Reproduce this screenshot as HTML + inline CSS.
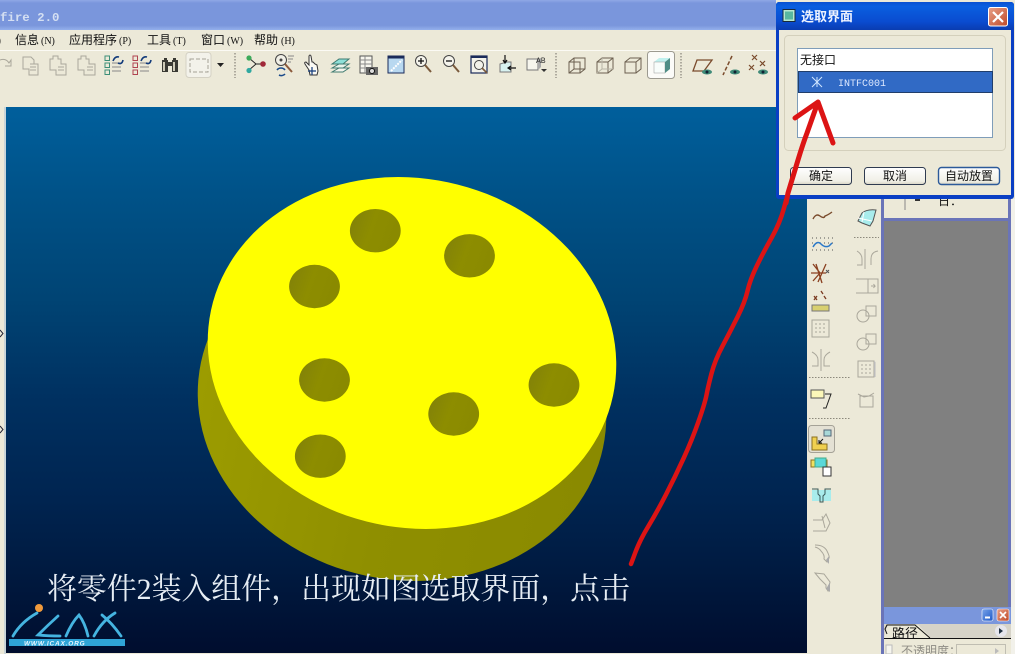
<!DOCTYPE html>
<html><head><meta charset="utf-8"><style>
html,body{margin:0;padding:0;background:#ece9d8;overflow:hidden}
svg{display:block}
text{font-family:"Liberation Sans","Noto Sans CJK SC",sans-serif}
.m{font-family:"Liberation Serif","Noto Serif CJK SC",serif;font-size:12px;fill:#111}
.k{font-family:"Liberation Sans","Noto Sans CJK SC",sans-serif;font-size:12px;fill:#111}
.g{fill:none;stroke:#aaa79b;stroke-width:1}
.d{fill:none;stroke:#6b5f4f;stroke-width:1}
.b{fill:none;stroke:#7a4b2c;stroke-width:1.4}
</style></head><body>
<svg xmlns="http://www.w3.org/2000/svg" width="1015" height="654" viewBox="0 0 1015 654">
<defs>
<linearGradient id="vp" x1="0" y1="0" x2="0" y2="1"><stop offset="0" stop-color="#005f9c"/><stop offset=".16" stop-color="#005288"/><stop offset=".35" stop-color="#004474"/><stop offset=".54" stop-color="#003060"/><stop offset=".72" stop-color="#002450"/><stop offset=".85" stop-color="#001a40"/><stop offset="1" stop-color="#000d2e"/></linearGradient>
<linearGradient id="tb" x1="0" y1="0" x2="0" y2="1"><stop offset="0" stop-color="#8fa8e6"/><stop offset=".1" stop-color="#7a96dc"/><stop offset=".85" stop-color="#7a96dc"/><stop offset="1" stop-color="#94b0ec"/></linearGradient>
<linearGradient id="dt" x1="0" y1="0" x2="0" y2="1"><stop offset="0" stop-color="#0a50d0"/><stop offset=".15" stop-color="#0a5fe0"/><stop offset=".7" stop-color="#0a4cd0"/><stop offset="1" stop-color="#0a3cb0"/></linearGradient>
<linearGradient id="hole" x1="0" y1="0" x2="1" y2=".3"><stop offset="0" stop-color="#80800a"/><stop offset=".5" stop-color="#8d8d00"/><stop offset="1" stop-color="#8a8a00"/></linearGradient>
<linearGradient id="side" x1="0" y1="0" x2="1" y2="0"><stop offset="0" stop-color="#9c9c00"/><stop offset=".5" stop-color="#8f8f00"/><stop offset="1" stop-color="#8a8a00"/></linearGradient>
<linearGradient id="btn" x1="0" y1="0" x2="0" y2="1"><stop offset="0" stop-color="#fff"/><stop offset=".8" stop-color="#f0efe6"/><stop offset="1" stop-color="#d8d4c4"/></linearGradient>
<linearGradient id="cls" x1="0" y1="0" x2="1" y2="1"><stop offset="0" stop-color="#e8a088"/><stop offset="1" stop-color="#c04a28"/></linearGradient>
<linearGradient id="mn" x1="0" y1="0" x2="1" y2="1"><stop offset="0" stop-color="#7aa4e8"/><stop offset="1" stop-color="#1c58c8"/></linearGradient>
</defs>

<rect width="1015" height="654" fill="#ece9d8"/>
<!-- title bar -->
<rect x="0" y="0" width="776" height="30" fill="url(#tb)"/>
<text x="0" y="21" style="font-family:'Liberation Mono',monospace;font-size:12.4px;font-weight:bold;fill:#d4dff2">fire 2.0</text>
<!-- menu -->
<rect x="0" y="30" width="776" height="20" fill="#ece9d8"/>
<rect x="0" y="50" width="776" height="1" fill="#fbfaf4"/>
<text class="m" x="-3" y="44">)</text>
<text class="k" x="15" y="44">信息</text><text class="m" x="41" y="44" style="font-size:10px">(N)</text>
<text class="k" x="69" y="44">应用程序</text><text class="m" x="119" y="44" style="font-size:10px">(P)</text>
<text class="k" x="147" y="44">工具</text><text class="m" x="173" y="44" style="font-size:10px">(T)</text>
<text class="k" x="201" y="44">窗口</text><text class="m" x="227" y="44" style="font-size:10px">(W)</text>
<text class="k" x="254" y="44">帮助</text><text class="m" x="281" y="44" style="font-size:10px">(H)</text>

<!-- toolbar icons -->
<path class="g" d="M0 60q6-2 9 3l2-3v6h-6" stroke-width="2"/>
<g class="g"><path d="M23 57h8l3 3v4h4v11h-9v-6h-6z"/><path d="M30 64h4M30 67h6M30 70h6"/></g>
<g class="g"><path d="M50 59h3v-3h5v3h3v5h5v11h-10v-5h-6z"/><path d="M58 67h6M58 70h6"/></g>
<g class="g"><path d="M78 59h3v-3h5v3h3v5h6v11h-11v-5h-6z"/><path d="M87 67h6M87 70h6"/></g>
<g fill="none" stroke="#3c8e78"><rect x="105" y="56" width="4.5" height="4.5"/><rect x="105" y="63" width="4.5" height="4.5"/><rect x="105" y="70" width="4.5" height="4.5"/></g>
<path d="M112 63h10M112 67h9M112 71h9" stroke="#888" fill="none"/>
<path d="M113 61q2-5 6-4M123 60q-1 5-5 3" stroke="#123a7a" stroke-width="1.6" fill="none"/>
<g fill="none" stroke="#b04450"><rect x="133" y="56" width="4.5" height="4.5"/><rect x="133" y="63" width="4.5" height="4.5"/><rect x="133" y="70" width="4.5" height="4.5"/></g>
<path d="M140 63h10M140 67h9M140 71h9" stroke="#888" fill="none"/>
<path d="M141 61q2-5 6-4M151 60q-1 5-5 3" stroke="#123a7a" stroke-width="1.6" fill="none"/>
<g fill="#3a3a34"><rect x="162" y="60" width="6" height="12"/><rect x="172" y="60" width="6" height="12"/><rect x="164" y="58" width="3" height="3"/><rect x="173" y="58" width="3" height="3"/><rect x="167" y="62" width="6" height="4"/></g><rect x="163" y="62" width="2" height="9" fill="#cfcbb8"/><rect x="173" y="62" width="2" height="9" fill="#cfcbb8"/>
<rect x="186" y="52.500" width="25" height="25" rx="3" fill="#f3f2ea" stroke="#d4d1c4"/>
<rect x="190" y="59" width="18" height="13" fill="none" stroke="#a5a297" stroke-dasharray="4 2"/>
<path d="M217 63h7l-3.500 4z" fill="#222"/>
<path d="M235 53v25M556 53v25M681 53v25" stroke="#99968a" stroke-width="1.500" stroke-dasharray="1.500 1.500"/>

<!-- datum etc -->
<path d="M256 64l-7-6M256 64h6M256 64l-7 6" stroke="#222" fill="none"/>
<circle cx="249" cy="58" r="2.600" fill="#3caa5a"/><circle cx="263" cy="64" r="2.800" fill="#a02838"/><circle cx="249" cy="70.500" r="2.600" fill="#30a8a0"/>
<circle cx="281" cy="60" r="5.500" fill="#f0efe6" stroke="#444"/><circle cx="281" cy="60" r="1.500" fill="#444"/>
<path d="M285 64l7 8" stroke="#8b5a3c" stroke-width="2"/><path d="M288 56h6M288 59h5M288 62h3" stroke="#888" stroke-width="1" fill="none"/>
<path d="M277 70a5 5 0 0 1 8 0M279 75a5 5 0 0 0 6-1" stroke="#1a4a8a" stroke-width="1.600" fill="none"/>
<path d="M309 70l-4-6q-1-2 1-2l3 3v-9q1-2 2 0l1 6h1l1 1 1 1 2 1 1 6-1 4h-7z" fill="#fbfaf4" stroke="#333"/>
<path d="M312 67v8M308 71h8" stroke="#123a7a" stroke-width="1.200"/>
<path d="M332 64l7-5h10l-6 5z" fill="#8ee0d8" stroke="#3f7a70"/><path d="M332 68l7-4h10l-6 4z" fill="#e8f3ea" stroke="#3f7a70"/><path d="M332 72l7-4h10l-6 4z" fill="#f5f4ec" stroke="#3f7a70"/>
<rect x="360" y="56" width="12" height="17" fill="#f7f6ee" stroke="#555"/><path d="M360 60h12M360 64h12M360 68h12M365 56v17" stroke="#888"/>
<rect x="366" y="67" width="12" height="8" fill="#666"/><circle cx="372" cy="71" r="2.500" fill="#ddd" stroke="#111"/>
<rect x="388" y="56" width="16" height="17" fill="#b8d8f0" stroke="#1a2a5a"/><rect x="388" y="56" width="16" height="2.500" fill="#1a2a5a"/><path d="M391 71l11-11" stroke="#fff" stroke-width="2" stroke-dasharray="2 1"/>
<!-- zoom -->
<circle cx="421" cy="61" r="5.500" fill="#f5f4ec" stroke="#444"/><path d="M418 61h6M421 58v6" stroke="#111" stroke-width="1.300"/><path d="M425 65l6 7" stroke="#7a5a3c" stroke-width="2"/>
<circle cx="449" cy="61" r="5.500" fill="#f5f4ec" stroke="#444"/><path d="M446 61h6" stroke="#111" stroke-width="1.300"/><path d="M453 65l6 7" stroke="#7a5a3c" stroke-width="2"/>
<rect x="471" y="56" width="16" height="17" fill="#f3f2ea" stroke="#1a2a5a" stroke-width="1.200"/><rect x="471" y="55.500" width="16" height="2.500" fill="#1a2a5a"/><circle cx="479" cy="65" r="4.500" fill="none" stroke="#444"/><path d="M482 68l5 5" stroke="#7a5a3c" stroke-width="1.600"/>
<path d="M500 64l7-2h4v10h-11z" fill="#d8f2f0" stroke="#777"/><path d="M505 55v7M503 60l2 3 2-3M516 68h-7M511 66l-3 2 3 2" fill="none" stroke="#111" stroke-width="1.200"/>
<rect x="527" y="59" width="11" height="11" fill="#f6f5ed" stroke="#777"/><path d="M538 59l3-1v9l-3 3z" fill="#aaa"/><text x="536" y="63" style="font-size:8px;font-family:'Liberation Mono',monospace;fill:#333">AB</text><path d="M541 69h6l-3 3z" fill="#333"/>
<!-- cubes -->
<g class="d"><path d="M569 62h11v11h-11zM569 62l5-4h11v11l-5 4M574 58v11h11M574 69l-5 4"/></g>
<g class="d"><path d="M597 62h11v11h-11zM597 62l5-4h11v11l-5 4M608 62l5-4" /><path d="M602 58v11h11M602 69l-5 4" stroke="#b8b5a6"/></g>
<g class="d"><path d="M625 62h11v11h-11zM625 62l5-4h11v11l-5 4M636 62l5-4"/></g>
<rect x="647.500" y="51.500" width="27" height="27" rx="3" fill="#fbfbf8" stroke="#9c9a90"/>
<path d="M654 62l5-4h11l-5 4z" fill="#bff0ee"/><rect x="654" y="62" width="11" height="11" fill="#f8fdfb" stroke="#999" stroke-width=".5"/><path d="M665 62l5-4v11l-5 4z" fill="#4f8d86"/>
<!-- datum display -->
<path d="M697 60h15l-8 11h-11z" fill="none" stroke="#7a4b2c" stroke-width="1.300"/><ellipse cx="707" cy="72" rx="5" ry="2.500" fill="#3f8a78"/><circle cx="707" cy="72" r="1.500" fill="#123"/>
<path d="M732 56l-9 19" stroke="#7a4b2c" stroke-width="1.500" stroke-dasharray="4 2"/><ellipse cx="735" cy="72" rx="5" ry="2.500" fill="#3f8a78"/><circle cx="735" cy="72" r="1.500" fill="#123"/>
<g stroke="#7a4b2c" stroke-width="1.200"><path d="M752 55l5 5M757 55l-5 5M760 61l5 5M765 61l-5 5M749 65l5 5M754 65l-5 5"/></g><ellipse cx="763" cy="72" rx="5" ry="2.500" fill="#3f8a78"/><circle cx="763" cy="72" r="1.500" fill="#123"/>

<!-- viewport -->
<rect x="0" y="107" width="6" height="547" fill="#ece9d8"/>
<rect x="4" y="107" width="2" height="547" fill="#c8d4d8"/>
<path d="M0 330l3 3.500-3 3.500M0 426l3 3.500-3 3.500" stroke="#223" fill="none"/>
<rect x="6" y="107" width="801" height="546" fill="url(#vp)"/>

<!-- part -->
<polygon points="208,345 198,397 606,421 616,369" fill="url(#side)"/>
<ellipse cx="402" cy="405" rx="205.500" ry="174.500" transform="rotate(12 402 405)" fill="url(#side)"/>
<ellipse cx="412" cy="353" rx="205.500" ry="174.500" transform="rotate(12 412 353)" fill="#ffff00"/>
<g fill="url(#hole)">
<ellipse cx="375.300" cy="230.700" rx="25.400" ry="21.700"/>
<ellipse cx="469.500" cy="255.800" rx="25.400" ry="21.700"/>
<ellipse cx="314.500" cy="286.500" rx="25.400" ry="21.700"/>
<ellipse cx="324.500" cy="380" rx="25.400" ry="21.700"/>
<ellipse cx="554" cy="385" rx="25.400" ry="21.700"/>
<ellipse cx="453.700" cy="414" rx="25.400" ry="21.700"/>
<ellipse cx="320.300" cy="456.200" rx="25.400" ry="21.700"/>
</g>

<!-- caption -->
<text x="47" y="599" style="font-family:'Liberation Serif','Noto Serif CJK SC',serif;font-size:29.900px;fill:#e6edf4">将零件2装入组件，出现如图选取界面，点击</text>

<!-- logo -->
<g fill="none" stroke="#45b4e0" stroke-width="3" stroke-linecap="round">
<path d="M13 636q8-14 24-23" stroke-width="2.800"/>
<path d="M58 616q-10 9-20 19 10 1 22 1" stroke-width="2.800"/>
<path d="M66 636q6-14 13-21 6 8 9 21" stroke-width="2.800"/>
<path d="M94 636q8-15 21-23M102 615q10 8 19 21" stroke-width="2.800"/>
</g>
<circle cx="39" cy="608" r="4" fill="#f09a3c"/>
<rect x="9" y="639" width="116" height="7" fill="#2fa4d6"/>
<text x="24" y="645.500" style="font-size:6.500px;font-weight:bold;font-style:italic;fill:#eaf6ff;letter-spacing:.8px">WWW.ICAX.ORG</text>

<!-- red arrow -->
<path d="M631 564L635.500 552Q640 540 648.500 526Q657 512 666 494.500Q675 477 683.500 458.500Q692 440 698.500 421.500Q705 403 706.500 395Q708 387 711.500 373.500Q715 360 722.500 346Q730 332 737.500 317Q745 302 747.500 291Q750 280 756.500 266.500Q763 253 771.500 238Q780 223 784 208L788 193" fill="none" stroke="#dc1414" stroke-width="4.500" stroke-linecap="round" stroke-linejoin="round"/>

<!-- right beige panel -->
<rect x="807" y="107" width="74" height="547" fill="#ece9d8"/>
<path d="M813 219q3-6 7-3t5 0q3-1 7-4" class="b"/>
<g fill="#555"><path d="M812 238h21M812 243h21M812 250h21" stroke="#555" stroke-width="1" stroke-dasharray="1 3"/></g>
<path d="M813 247q4-7 8-3t8 2l3-3" fill="none" stroke="#2a78c8" stroke-width="1.500"/>
<path d="M813 264l7 9-7 8M826 264l-8 18M811 273h15M816 264l6 19" stroke="#8a4020" stroke-width="1.300" fill="none"/><path d="M826 270l3 3m0-3l-3 3" stroke="#555"/>
<rect x="812" y="305" width="17" height="6" fill="#d8d070" stroke="#777"/><path d="M814 296l3 4m0-4l-3 4M821 291l2 3M824 296l2 3" stroke="#7a3a20" stroke-width="1.300"/>
<rect x="812" y="320" width="17" height="17" fill="#ece9d8" stroke="#a8a69a"/><path d="M815 324h11M815 328h11M815 332h11" stroke="#a8a69a" stroke-dasharray="2 2"/>
<path d="M821 349v22M812 352q6 3 6 8v6h-6M830 352q-6 3-6 8v6h6" class="g"/>
<path d="M809 377.500h41M809 418.500h41" stroke="#8c897c" stroke-dasharray="1.500 1.500"/>
<rect x="811" y="390" width="13" height="8" fill="#fbf7b8" stroke="#555"/><path d="M825 394h6l-5 14h-3" fill="none" stroke="#222"/>
<!-- column 2 -->
<path d="M858 221l4-8q5-4 14-3l-3 11-3 5-8-3z" fill="#a8ecec" stroke="#555"/><path d="M864 212l-2 10M858 218l14 3" stroke="#fff" fill="none"/>
<path d="M854 237.500h25" stroke="#8c897c" stroke-dasharray="1.500 1.500"/>
<path d="M865 249v20M857 251q5 3 5 8v6h-5M878 251q-7 1-7 8v6" class="g"/>
<path d="M856 279h22v14h-22M868 279v14M871 286h4l-1.500-2M875 286l-1.500 2" class="g"/>
<rect x="866" y="306" width="10" height="10" class="g"/><circle cx="863" cy="316" r="6" class="g"/>
<rect x="866" y="334" width="10" height="10" class="g"/><circle cx="863" cy="344" r="6" class="g"/>
<rect x="858" y="361" width="16" height="16" class="g"/><path d="M861 365h10M861 369h10M861 373h10" class="g" stroke-dasharray="2 2"/><path d="M874 361l1.500 1v15h-1.500z" fill="#bbb"/>
<path d="M860 396h13v11h-13zM858 394l6 3 5-1 5-3" class="g" stroke="#8c897c"/>
<!-- bottom icons col 1 -->
<rect x="808.500" y="425.500" width="26" height="27" rx="3" fill="#e4e1d4" stroke="#a5a297"/>
<path d="M812 437h5v7h10v6h-15z" fill="#f0d050" stroke="#8a7020"/><rect x="824" y="430" width="7" height="6" fill="#a8d8d8" stroke="#567"/><path d="M823 439l-4 4M819 440v3h3" stroke="#111" fill="none"/>
<path d="M811 460h16v7h-16z" fill="#f0e060" stroke="#8a7020"/><path d="M815 458h11v9h-11z" fill="#5ad8d8" stroke="#4a8"/><rect x="823" y="467" width="8" height="9" fill="#fff" stroke="#333"/>
<rect x="812" y="490" width="19" height="11" fill="#a8ecec"/><path d="M812 489h6v5l2 2v6h3v-6l2-2v-5h6" fill="none" stroke="#3a5a5a"/>
<path d="M813 520h9l4-6 4 9-4 8h-13M822 516l3 12" class="g"/>
<path d="M815 545q9 0 12 6t2 7l-2 4-3-3q1-4-3-8-2-3-6-4" class="g"/><path d="M829 556v8l-3-4z" fill="#aaa"/>
<path d="M815 573l9 1 6 8-2 9-2-3v-3l-6-6z" class="g"/><path d="M830 582v10l-4-3z" fill="#aaa"/>

<!-- left border right panel -->
<rect x="881" y="199" width="3" height="455" fill="#6a74b8"/>
<rect x="884" y="199" width="128" height="20" fill="#ece9d8"/>
<rect x="881" y="218" width="131" height="3" fill="#6a74b8"/>
<path d="M905 199v11" stroke="#888"/><path d="M915 200h5" stroke="#333" stroke-width="2"/><text class="k" x="938" y="205">日：</text>
<rect x="884" y="221" width="124" height="386" fill="#808080"/>
<rect x="1008" y="199" width="3" height="455" fill="#6a74b8"/>
<rect x="1011" y="199" width="4" height="455" fill="#f2f1ea"/>

<!-- bottom docked panel -->
<rect x="884" y="607" width="127" height="17" fill="#7a96dc"/>
<rect x="982" y="609" width="11" height="12" rx="2" fill="url(#mn)" stroke="#fff" stroke-width=".6"/><rect x="985" y="616.500" width="5" height="2" fill="#fff"/>
<rect x="997" y="609" width="12" height="12" rx="2" fill="url(#cls)" stroke="#fff" stroke-width=".6"/><path d="M1000 612l6 6m0-6l-6 6" stroke="#fff" stroke-width="1.600"/>
<rect x="884" y="624" width="127" height="14" fill="#d6d3c8"/>
<path d="M884 638.500h127" stroke="#111"/>
<path d="M884 638l3-11q1-2 3-2h27q2 0 3 2l11 11z" fill="#ece9d8"/>
<path d="M887 634l-2-5 2-4h28l15 13" fill="none" stroke="#111"/>
<text class="k" x="892" y="638" style="font-size:13px">路径</text>
<circle cx="1001" cy="631" r="6" fill="#e6e6ec"/><path d="M999 628l4 3-4 3z" fill="#234"/>
<rect x="884" y="639" width="127" height="15" fill="#ece9d8"/>
<rect x="886" y="645" width="6" height="9" fill="#f6f5ee" stroke="#bbb"/>
<text class="k" x="901" y="655" style="fill:#8e8c84">不透明度：</text>
<rect x="956.500" y="644.500" width="49" height="11" fill="none" stroke="#c0beb2"/>
<path d="M995 648l4 3-4 3z" fill="#bbb"/>

<!-- dialog -->
<rect x="776" y="2" width="238" height="197" rx="3" fill="#0a3fc4"/>
<rect x="776" y="2" width="238" height="28" rx="3" fill="url(#dt)"/>
<rect x="779" y="30" width="232" height="165" fill="#ece9d8"/>
<rect x="783" y="9.500" width="12" height="12" fill="#b8e8d0" stroke="#1a2a3a"/><rect x="785" y="11.500" width="8" height="8" fill="#58b8a0"/>
<text x="801" y="21" style="font-size:13px;font-weight:bold;fill:#eef3ff">选取界面</text>
<rect x="988.500" y="7.500" width="19" height="18.500" rx="2" fill="url(#cls)" stroke="#fff"/>
<path d="M993 12l10 10m0-10l-10 10" stroke="#fff" stroke-width="2.200"/>
<rect x="784.500" y="35.500" width="221" height="115" rx="4" fill="none" stroke="#d4d0bc"/>
<rect x="797.500" y="48.500" width="195" height="89" fill="#fff" stroke="#7f9db9"/>
<text class="k" x="800" y="64">无接口</text>
<rect x="798" y="71" width="195" height="22" fill="#316ac5"/>
<rect x="798.500" y="71.500" width="194" height="21" fill="none" stroke="#111" stroke-dasharray="1 1"/>
<path d="M817 77v10M812 77l10 10M822 77l-10 10" stroke="#cfe6ff" stroke-width="1"/>
<text x="838" y="86" style="font-family:'Liberation Mono',monospace;font-size:10px;fill:#dde8ff">INTFC001</text>
<g fill="url(#btn)" stroke="#2f3b50"><rect x="790.500" y="167.500" width="61" height="17" rx="3"/><rect x="864.500" y="167.500" width="61" height="17" rx="3"/><rect x="938.500" y="167.500" width="61" height="17" rx="3" stroke="#2c5a9a" stroke-width="1.400"/></g>
<text class="k" x="809" y="180">确定</text><text class="k" x="883" y="180">取消</text><text class="k" x="945" y="180">自动放置</text>

<!-- red arrow over dialog -->
<path d="M786 203L788 193Q793 176.500 798 160T807 133L818 102M795 118L818 102L833 143" fill="none" stroke="#dc1414" stroke-width="5" stroke-linecap="round" stroke-linejoin="round"/>
</svg>
</body></html>
